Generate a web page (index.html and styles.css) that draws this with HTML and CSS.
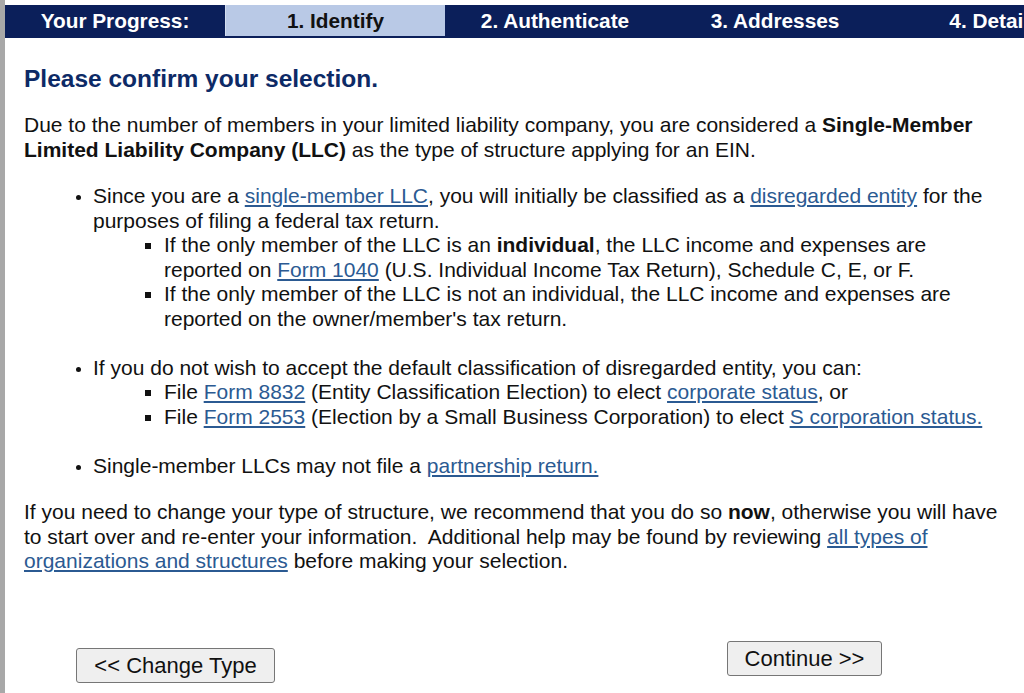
FILE: index.html
```html
<!DOCTYPE html>
<html lang="en">
  <head>
    <meta charset="UTF-8" />
    <meta name="viewport" content="width=device-width, initial-scale=1.0" />
    <title>EIN Assistant - Confirm Selection</title>
    <link rel="stylesheet" href="styles.css">
  </head>
  <body>
    <div class="page">
      <div class="progress">
        <div class="step label">Your Progress:</div>
        <div class="step current">1. Identify</div>
        <div class="step">2. Authenticate</div>
        <div class="step">3. Addresses</div>
        <div class="step">4. Details</div>
      </div>

      <div class="content">
        <h1>Please confirm your selection.</h1>

        <p>
          Due to the number of members in your limited liability company, you are considered a
          <strong>Single-Member Limited Liability Company (LLC)</strong> as the type of structure
          applying for an EIN.
        </p>

        <ul class="options">
          <li>
            Since you are a <a href="#">single-member LLC</a>, you will initially be classified as a
            <a href="#">disregarded entity</a> for the purposes of filing a federal tax return.
            <ul class="sub">
              <li>
                If the only member of the LLC is an <strong>individual</strong>, the LLC income and
                expenses are reported on <a href="#">Form 1040</a> (U.S. Individual Income Tax
                Return), Schedule C, E, or F.
              </li>
              <li>
                If the only member of the LLC is not an individual, the LLC income and expenses are
                reported on the owner/member's tax return.
              </li>
            </ul>
          </li>
          <li>
            If you do not wish to accept the default classification of disregarded entity, you can:
            <ul class="sub">
              <li>
                File <a href="#">Form 8832</a> (Entity Classification Election) to elect
                <a href="#">corporate status</a>, or
              </li>
              <li>
                File <a href="#">Form 2553</a> (Election by a Small Business Corporation) to elect
                <a href="#">S corporation status.</a>
              </li>
            </ul>
          </li>
          <li>Single-member LLCs may not file a <a href="#">partnership return.</a></li>
        </ul>

        <p>
          If you need to change your type of structure, we recommend that you do so
          <strong>now</strong>, otherwise you will have to start over and re-enter your
          information.&nbsp; Additional help may be found by reviewing
          <a href="#">all types of organizations and structures</a> before making your selection.
        </p>

        <div class="actions">
          <button class="back">&lt;&lt; Change Type</button>
          <button class="next">Continue &gt;&gt;</button>
        </div>
      </div>
    </div>
  </body>
</html>
```

FILE: styles.css
```css
body {
  margin: 0;
  font-family: "Liberation Sans", Arial, sans-serif;
  background-color: #ffffff;
  color: #111111;
}

.page {
  min-height: 100vh;
  border-left: 5px solid #a8a8a8;
  overflow: hidden;
}

/* progress bar across the top */
.progress {
  display: flex;
  margin-top: 5px;
  background-color: #0b1f5a;
  border-bottom: 2px solid #0b1f5a;
  white-space: nowrap;
}

.step {
  flex: 0 0 220px;
  height: 31px;
  line-height: 31px;
  text-align: center;
  font-size: 20.8px;
  font-weight: bold;
  color: #ffffff;
}

.step.current {
  background-color: #b9c9e6;
  color: #111111;
  border-left: 1px solid #d3ddef;
  flex-basis: 219px;
}

.content {
  padding: 0 16px 0 19px;
  font-size: 21px;
  line-height: 24.5px;
}

h1 {
  margin: 27px 0 20px;
  font-size: 24.5px;
  line-height: 28px;
  color: #0d2a66;
}

p {
  margin: 20px 0;
}

a {
  color: #2b5a92;
}

.options {
  margin: 22px 0;
  padding-left: 69px;
}

.options > li::marker {
  font-size: 17px;
}

.options > li + li {
  margin-top: 24.5px;
}

.sub {
  margin: 0;
  padding-left: 71px;
  list-style-type: square;
}

.actions {
  display: flex;
  align-items: flex-start;
  margin-top: 67px;
  padding-left: 52px;
}

button {
  font-family: "Liberation Sans", Arial, sans-serif;
  font-size: 22px;
  line-height: 25px;
  padding: 4px 13px;
  background-color: #efefef;
  color: #111111;
  border: 1px solid #767676;
  border-radius: 3px;
  cursor: pointer;
}

.back {
  margin-top: 7px;
  width: 199px;
}

.next {
  margin-left: 452px;
  width: 155px;
}
```
